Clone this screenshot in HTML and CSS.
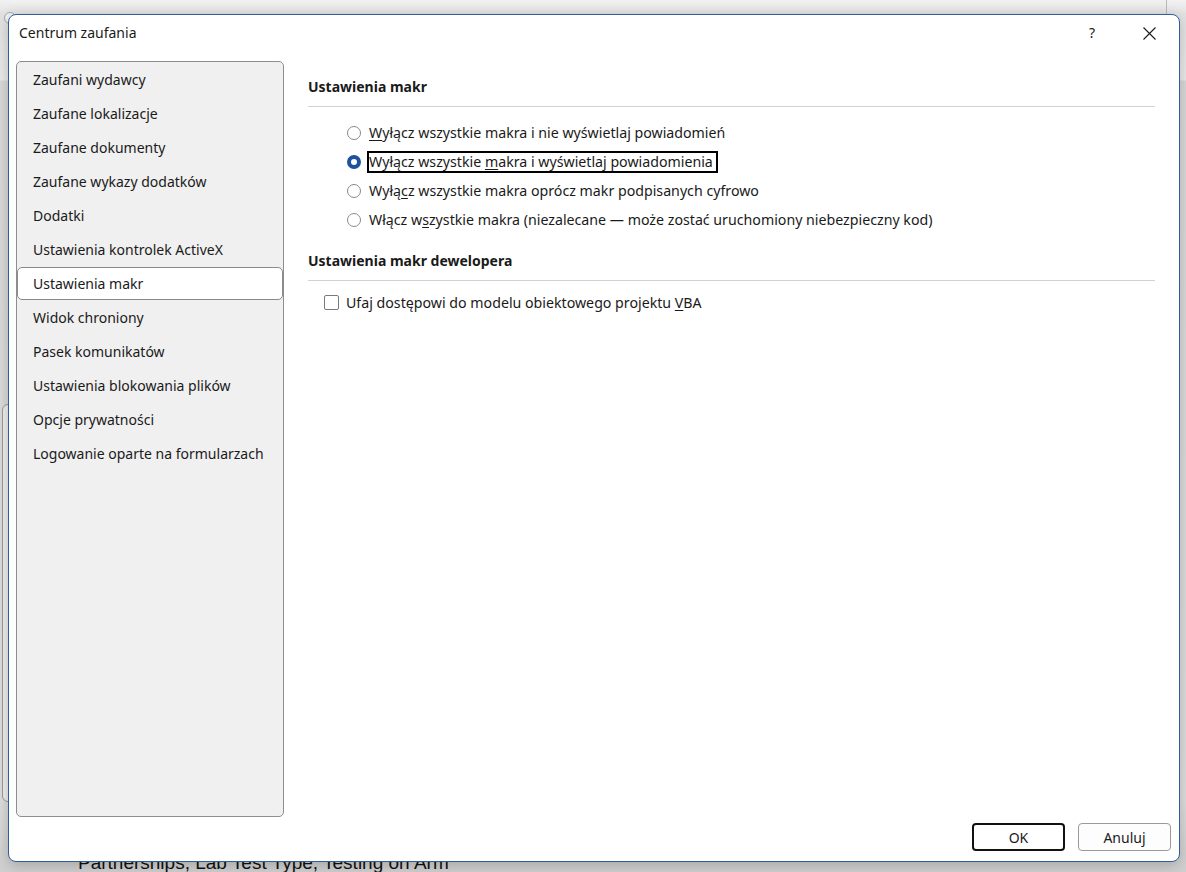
FILE: index.html
```html
<!DOCTYPE html>
<html lang="pl">
<head>
<meta charset="utf-8">
<title>Centrum zaufania</title>
<link rel="stylesheet" href="styles.css">
</head>
<body>
<div class="desktop">
  <div class="back-window">
    <div class="back-dot"></div>
    <div class="back-panel"></div>
    <div class="back-text">Partnerships, Lab Test Type, Testing on Arm</div>
  </div>

  <div class="dialog">
    <div class="titlebar">
      <div class="title">Centrum zaufania</div>
      <div class="title-actions">
        <span class="help">?</span>
        <span class="close">
          <svg width="13" height="13" viewBox="0 0 13 13"><path d="M0.5 0.5 L12.5 12.5 M12.5 0.5 L0.5 12.5" stroke="#1a1a1a" stroke-width="1.1" fill="none"/></svg>
        </span>
      </div>
    </div>

    <div class="body">
      <nav class="nav">
        <div class="nav-item">Zaufani wydawcy</div>
        <div class="nav-item">Zaufane lokalizacje</div>
        <div class="nav-item">Zaufane dokumenty</div>
        <div class="nav-item">Zaufane wykazy dodatków</div>
        <div class="nav-item">Dodatki</div>
        <div class="nav-item">Ustawienia kontrolek ActiveX</div>
        <div class="nav-item selected">Ustawienia makr</div>
        <div class="nav-item">Widok chroniony</div>
        <div class="nav-item">Pasek komunikatów</div>
        <div class="nav-item">Ustawienia blokowania plików</div>
        <div class="nav-item">Opcje prywatności</div>
        <div class="nav-item">Logowanie oparte na formularzach</div>
      </nav>

      <main class="content">
        <h2 class="section-title">Ustawienia makr</h2>
        <div class="options">
          <div class="option"><span class="radio"></span><span class="label"><u>W</u>yłącz wszystkie makra i nie wyświetlaj powiadomień</span></div>
          <div class="option"><span class="radio checked"></span><span class="label focused">Wyłącz wszystkie <u>m</u>akra i wyświetlaj powiadomienia</span></div>
          <div class="option"><span class="radio"></span><span class="label">Wyłą<u>c</u>z wszystkie makra oprócz makr podpisanych cyfrowo</span></div>
          <div class="option"><span class="radio"></span><span class="label">Włącz w<u>s</u>zystkie makra (niezalecane — może zostać uruchomiony niebezpieczny kod)</span></div>
        </div>

        <h2 class="section-title second">Ustawienia makr dewelopera</h2>
        <div class="check-row"><span class="checkbox"></span><span class="check-label">Ufaj dostępowi do modelu obiektowego projektu <u>V</u>BA</span></div>
      </main>
    </div>

    <div class="footer">
      <button class="btn primary">OK</button>
      <button class="btn">Anuluj</button>
    </div>
  </div>
</div>
</body>
</html>
```

FILE: styles.css
```css
* { box-sizing: border-box; }

html, body {
  margin: 0;
  padding: 0;
}

body {
  width: 1186px;
  height: 872px;
  overflow: hidden;
  font-family: "Noto Sans", "Open Sans", sans-serif;
  color: #1a1a1a;
}

.desktop {
  position: relative;
  width: 1186px;
  height: 872px;
  background: linear-gradient(#f2f2f2 0, #e2e2e2 14px, #ebebeb 80px, #d9d9d9 81px, #dedede 800px, #cfcfcf 872px);
  overflow: hidden;
}

.back-window {
  position: absolute;
  left: 0;
  top: 0;
  width: 1186px;
  height: 872px;
}

.back-window::before {
  content: "";
  position: absolute;
  left: -20px;
  top: -30px;
  width: 1185px;
  height: 120px;
  border: 1px solid #b9b9b9;
  border-bottom: none;
  border-radius: 8px 8px 0 0;
}

.back-dot {
  position: absolute;
  left: 4px;
  top: 12px;
  width: 12px;
  height: 12px;
  border-radius: 50%;
  border: 1px solid #a8a8a8;
  background: #f4f4f4;
}

.back-panel {
  position: absolute;
  left: 2px;
  top: 404px;
  width: 30px;
  height: 398px;
  border: 1px solid #9a9a9a;
  border-radius: 6px;
  background: #efefef;
}

.back-text {
  position: absolute;
  left: 78px;
  top: 852px;
  font-family: "Liberation Sans", Arial, sans-serif;
  font-size: 19px;
  line-height: 22px;
  color: #111;
  white-space: nowrap;
}

.dialog {
  position: absolute;
  left: 8px;
  top: 14px;
  width: 1172px;
  height: 848px;
  background: #ffffff;
  border: 1px solid #2f5e9e;
  border-radius: 8px;
  box-shadow: 0 3px 14px rgba(0, 0, 0, 0.22);
  display: flex;
  flex-direction: column;
}

.titlebar {
  height: 46px;
  flex: none;
  display: flex;
  align-items: flex-start;
  justify-content: space-between;
  padding: 8px 0 0 10px;
}

.title {
  font-size: 14px;
  line-height: 20px;
}

.title-actions {
  display: flex;
  align-items: center;
  height: 20px;
}

.help {
  font-size: 14px;
  line-height: 20px;
  width: 20px;
  text-align: center;
  margin-right: 41px;
}

.close {
  width: 13px;
  height: 13px;
  display: flex;
  margin-right: 23px;
}

.body {
  flex: 1;
  display: flex;
  min-height: 0;
}

.nav {
  width: 268px;
  margin-left: 7px;
  flex: none;
  background: #f0f0f0;
  border: 1px solid #8e8e8e;
  border-radius: 5px;
  padding-top: 1px;
  display: flex;
  flex-direction: column;
}

.nav-item {
  height: 33px;
  margin-bottom: 1px;
  display: flex;
  align-items: center;
  padding-left: 15px;
  font-size: 14px;
  border: 1px solid transparent;
  border-radius: 5px;
}

.nav-item.selected {
  background: #ffffff;
  border-color: #8a8a8a;
}

.content {
  flex: 1;
  padding: 16px 24px 0 24px;
}

.section-title {
  margin: 0;
  font-size: 14px;
  font-weight: 700;
  line-height: 20px;
  padding-bottom: 9px;
  border-bottom: 1px solid #d2d2d2;
}

.section-title.second {
  margin-top: 17px;
}

.options {
  margin-top: 11px;
  padding-left: 39px;
}

.option {
  height: 29px;
  display: flex;
  align-items: center;
}

.radio {
  width: 14px;
  height: 14px;
  flex: none;
  border-radius: 50%;
  border: 1px solid #8a8a8a;
  background: #fff;
  margin-right: 6px;
}

.radio.checked {
  border: 4px solid #1c52a0;
}

.label {
  font-size: 14.2px;
  line-height: 18px;
  padding: 0 3px 0 0;
  border: 2px solid transparent;
  white-space: nowrap;
}

.label.focused {
  border-color: #000;
}

u {
  text-decoration-thickness: 1px;
  text-underline-offset: 2px;
}

.check-row {
  margin-top: 7px;
  height: 28px;
  padding-left: 16px;
  display: flex;
  align-items: center;
}

.checkbox {
  width: 15px;
  height: 15px;
  flex: none;
  border: 1px solid #7a7a7a;
  border-radius: 2px;
  background: #fff;
  margin-right: 7px;
}

.check-label {
  font-size: 14.2px;
  white-space: nowrap;
}

.footer {
  height: 44px;
  flex: none;
  display: flex;
  justify-content: flex-end;
  align-items: flex-start;
  gap: 13px;
  padding: 6px 8px 0 0;
}

.btn {
  width: 93px;
  height: 28px;
  font-family: "Noto Sans", "Open Sans", sans-serif;
  font-size: 14px;
  color: #1a1a1a;
  background: #fdfdfd;
  border: 1px solid #9a9a9a;
  border-radius: 4px;
  padding: 0;
}

.btn.primary {
  border: 2px solid #111;
  background: #fff;
}
```
